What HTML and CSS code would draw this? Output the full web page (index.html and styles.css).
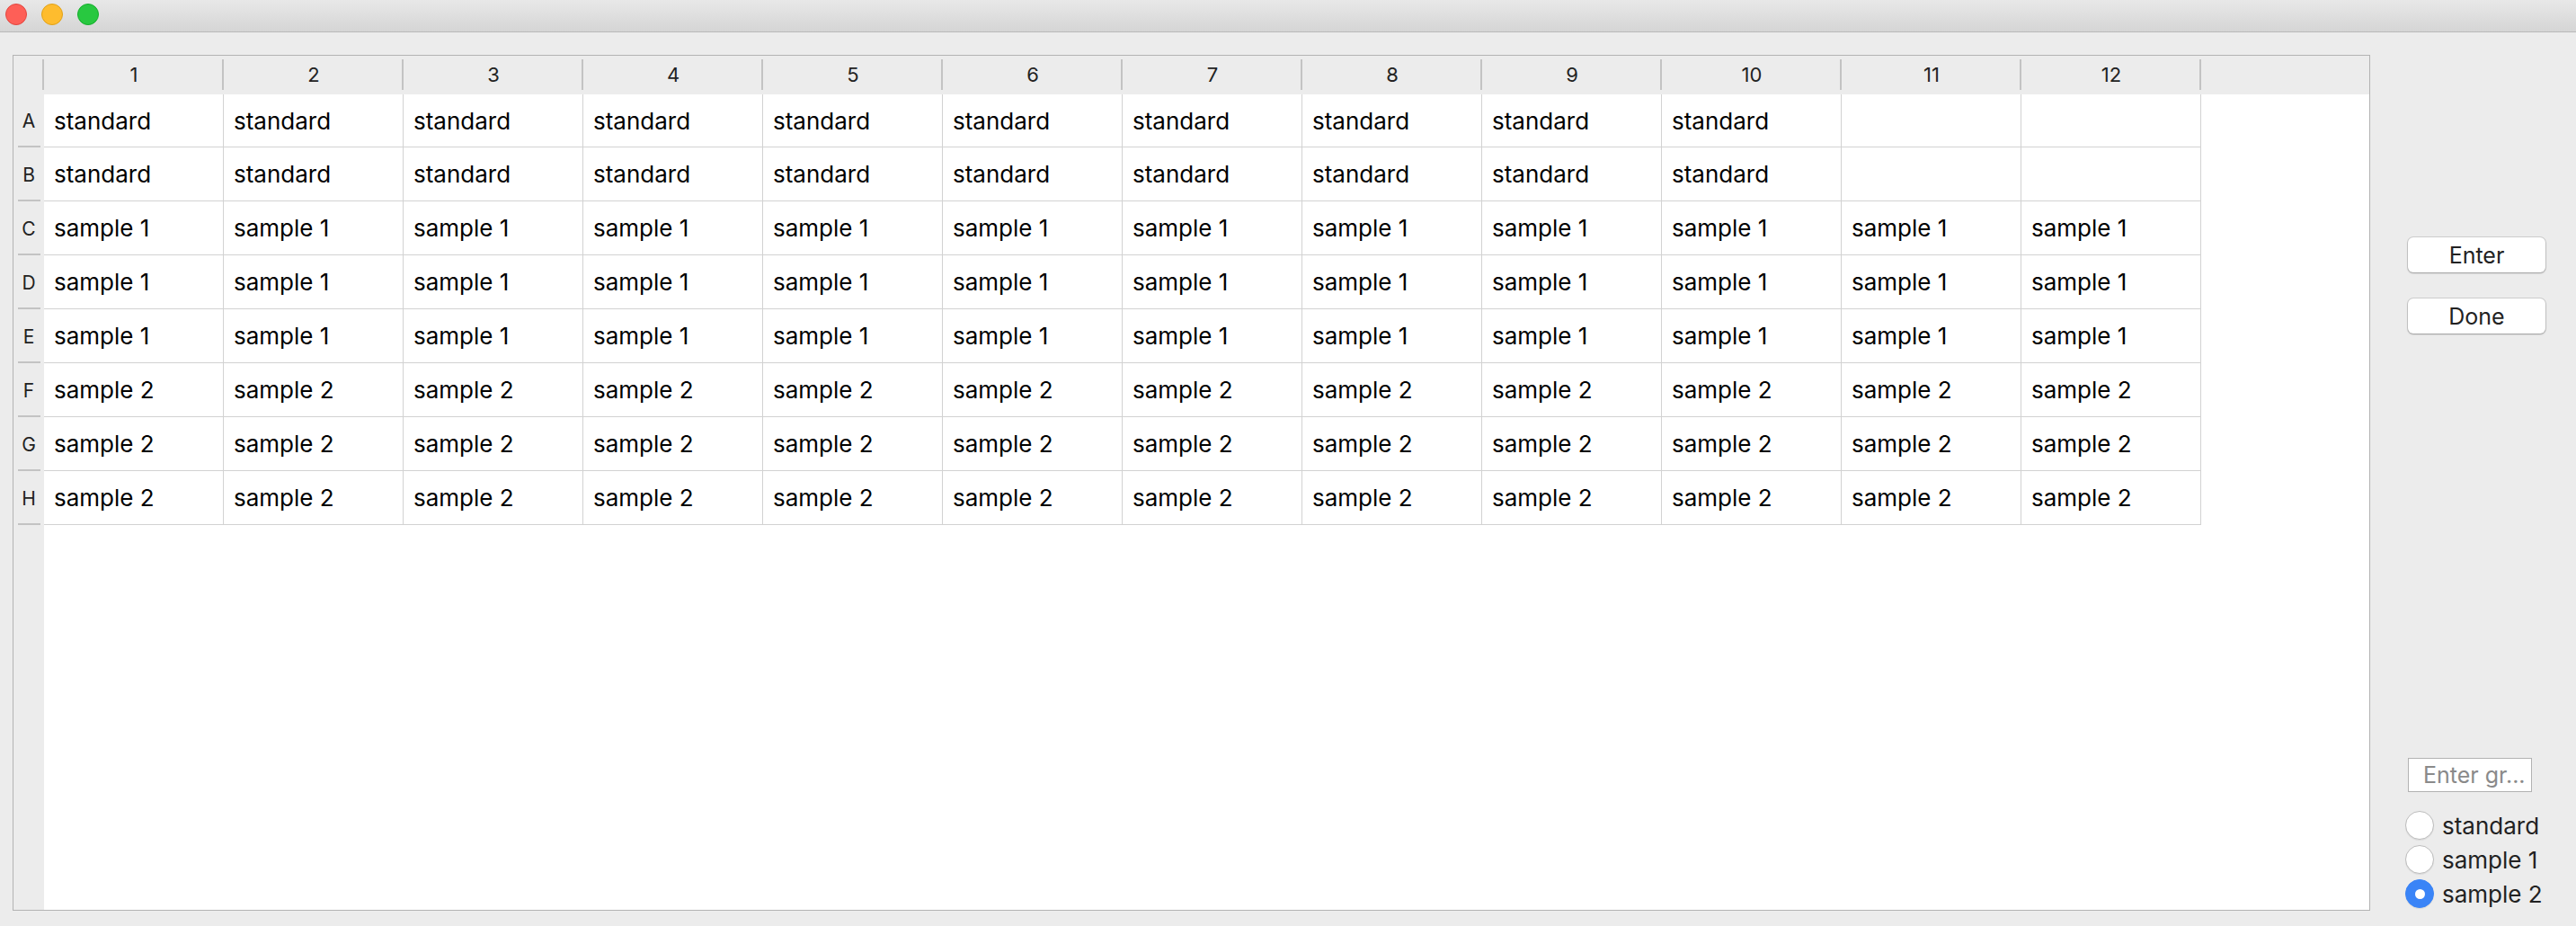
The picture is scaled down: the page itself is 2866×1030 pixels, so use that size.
FILE: index.html
```html
<!DOCTYPE html>
<html lang="en">
<head>
    <meta charset="UTF-8">
    <title>Plate</title>
    <link rel="stylesheet" href="styles.css">
</head>
<body>
    <div class="window">
        <div class="titlebar">
            <span class="light light-red"></span>
            <span class="light light-yellow"></span>
            <span class="light light-green"></span>
        </div>

        <div class="content">
            <div class="sheet">
                <div class="corner"></div>
                <div class="col-head">1</div>
                <div class="col-head">2</div>
                <div class="col-head">3</div>
                <div class="col-head">4</div>
                <div class="col-head">5</div>
                <div class="col-head">6</div>
                <div class="col-head">7</div>
                <div class="col-head">8</div>
                <div class="col-head">9</div>
                <div class="col-head">10</div>
                <div class="col-head">11</div>
                <div class="col-head">12</div>
                <div class="head-fill"></div>
                <div class="side-fill"></div>

                <div class="row-head">A</div>
                <div class="cell">standard</div><div class="cell">standard</div><div class="cell">standard</div><div class="cell">standard</div><div class="cell">standard</div><div class="cell">standard</div><div class="cell">standard</div><div class="cell">standard</div><div class="cell">standard</div><div class="cell">standard</div><div class="cell"></div><div class="cell"></div>

                <div class="row-head">B</div>
                <div class="cell">standard</div><div class="cell">standard</div><div class="cell">standard</div><div class="cell">standard</div><div class="cell">standard</div><div class="cell">standard</div><div class="cell">standard</div><div class="cell">standard</div><div class="cell">standard</div><div class="cell">standard</div><div class="cell"></div><div class="cell"></div>

                <div class="row-head">C</div>
                <div class="cell">sample 1</div><div class="cell">sample 1</div><div class="cell">sample 1</div><div class="cell">sample 1</div><div class="cell">sample 1</div><div class="cell">sample 1</div><div class="cell">sample 1</div><div class="cell">sample 1</div><div class="cell">sample 1</div><div class="cell">sample 1</div><div class="cell">sample 1</div><div class="cell">sample 1</div>

                <div class="row-head">D</div>
                <div class="cell">sample 1</div><div class="cell">sample 1</div><div class="cell">sample 1</div><div class="cell">sample 1</div><div class="cell">sample 1</div><div class="cell">sample 1</div><div class="cell">sample 1</div><div class="cell">sample 1</div><div class="cell">sample 1</div><div class="cell">sample 1</div><div class="cell">sample 1</div><div class="cell">sample 1</div>

                <div class="row-head">E</div>
                <div class="cell">sample 1</div><div class="cell">sample 1</div><div class="cell">sample 1</div><div class="cell">sample 1</div><div class="cell">sample 1</div><div class="cell">sample 1</div><div class="cell">sample 1</div><div class="cell">sample 1</div><div class="cell">sample 1</div><div class="cell">sample 1</div><div class="cell">sample 1</div><div class="cell">sample 1</div>

                <div class="row-head">F</div>
                <div class="cell">sample 2</div><div class="cell">sample 2</div><div class="cell">sample 2</div><div class="cell">sample 2</div><div class="cell">sample 2</div><div class="cell">sample 2</div><div class="cell">sample 2</div><div class="cell">sample 2</div><div class="cell">sample 2</div><div class="cell">sample 2</div><div class="cell">sample 2</div><div class="cell">sample 2</div>

                <div class="row-head">G</div>
                <div class="cell">sample 2</div><div class="cell">sample 2</div><div class="cell">sample 2</div><div class="cell">sample 2</div><div class="cell">sample 2</div><div class="cell">sample 2</div><div class="cell">sample 2</div><div class="cell">sample 2</div><div class="cell">sample 2</div><div class="cell">sample 2</div><div class="cell">sample 2</div><div class="cell">sample 2</div>

                <div class="row-head">H</div>
                <div class="cell">sample 2</div><div class="cell">sample 2</div><div class="cell">sample 2</div><div class="cell">sample 2</div><div class="cell">sample 2</div><div class="cell">sample 2</div><div class="cell">sample 2</div><div class="cell">sample 2</div><div class="cell">sample 2</div><div class="cell">sample 2</div><div class="cell">sample 2</div><div class="cell">sample 2</div>

                <div class="row-head-fill"></div>
                <div class="bottom-fill"></div>
            </div>

            <div class="side">
                <button class="mac-button first">Enter</button>
                <button class="mac-button">Done</button>

                <div class="side-bottom">
                    <input class="group-input" type="text" placeholder="Enter gr...">
                    <label class="radio"><span class="radio-dot"></span>standard</label>
                    <label class="radio"><span class="radio-dot"></span>sample 1</label>
                    <label class="radio"><span class="radio-dot checked"></span>sample 2</label>
                </div>
            </div>
        </div>
    </div>
</body>
</html>
```

FILE: styles.css
```css
body {
    margin: 0;
    background-color: #ececec;
    font-family: Inter, "Liberation Sans", sans-serif;
    overflow: hidden;
}

.window {
    width: 2866px;
    height: 1030px;
    display: flex;
    flex-direction: column;
}

.titlebar {
    height: 36px;
    flex: 0 0 36px;
    background: linear-gradient(#e8e8e8, #d5d5d5);
    border-bottom: 1px solid #b9b9b9;
    display: flex;
    align-items: center;
    gap: 16px;
    padding-left: 6px;
    padding-bottom: 4px;
    box-sizing: border-box;
}

.light {
    width: 24px;
    height: 24px;
    border-radius: 50%;
    box-sizing: border-box;
}

.light-red {
    background-color: #fe5f57;
    border: 1px solid #e2463f;
}

.light-yellow {
    background-color: #febc2e;
    border: 1px solid #e1a116;
}

.light-green {
    background-color: #28c840;
    border: 1px solid #14ae2b;
}

.content {
    flex: 1;
    display: flex;
    padding: 25px 0 17px 14px;
    min-height: 0;
}

.sheet {
    flex: 0 0 2623px;
    box-sizing: border-box;
    border: 1px solid #b3b3b3;
    background-color: #fff;
    display: grid;
    grid-template-columns: 34px repeat(12, 200px) 1fr;
    grid-template-rows: 43px 59px repeat(7, 60px) 1fr;
}

.corner,
.col-head,
.head-fill {
    background-color: #ececec;
    position: relative;
}

.col-head {
    display: flex;
    align-items: center;
    justify-content: center;
    font-size: 22px;
    color: #222;
    padding-bottom: 2px;
}

.corner::after,
.col-head::after {
    content: "";
    position: absolute;
    right: 0;
    top: 4px;
    bottom: 5px;
    width: 2px;
    background-color: #c3c3c3;
}

.side-fill {
    grid-column: 14;
    grid-row: 2 / 10;
}

.row-head {
    background-color: #ececec;
    display: flex;
    align-items: center;
    justify-content: center;
    font-size: 21px;
    color: #222;
    position: relative;
}

.row-head::after {
    content: "";
    position: absolute;
    left: 5px;
    right: 4px;
    bottom: 0;
    height: 2px;
    background-color: #c3c3c3;
}

.cell {
    border-right: 1px solid #d2d2d2;
    border-bottom: 1px solid #d2d2d2;
    display: flex;
    align-items: center;
    padding-left: 11px;
    font-size: 26px;
    color: #000;
    white-space: nowrap;
}

.row-head-fill {
    background-color: #ececec;
}

.bottom-fill {
    grid-column: 2 / 15;
}

.side {
    flex: 1;
    display: flex;
    flex-direction: column;
    padding-left: 42px;
}

.mac-button {
    width: 153px;
    height: 39px;
    margin-top: 29px;
    background-color: #fff;
    border: none;
    border-radius: 6px;
    box-shadow: 0 0 0 1px rgba(0, 0, 0, 0.12), 0 1px 2px rgba(0, 0, 0, 0.25);
    font-family: Inter, "Liberation Sans", sans-serif;
    font-size: 25px;
    color: #222;
    padding: 0;
}

.mac-button.first {
    margin-top: 203px;
}

.side-bottom {
    margin-top: auto;
    margin-left: -3px;
    display: flex;
    flex-direction: column;
}

.group-input {
    width: 138px;
    height: 38px;
    box-sizing: border-box;
    margin-left: 3px;
    margin-bottom: 18px;
    border: 1px solid #b2b2b2;
    background-color: #fff;
    font-family: Inter, "Liberation Sans", sans-serif;
    font-size: 25px;
    padding: 0 0 0 16px;
    outline: none;
}

.group-input::placeholder {
    color: #8a8a8a;
}

.radio {
    display: flex;
    align-items: center;
    gap: 9px;
    height: 38px;
    font-size: 26px;
    color: #222;
}

.radio-dot {
    width: 32px;
    height: 32px;
    box-sizing: border-box;
    border-radius: 50%;
    background-color: #fff;
    border: 1px solid #bdbdbd;
    box-shadow: 0 1px 1px rgba(0, 0, 0, 0.08);
    display: flex;
    align-items: center;
    justify-content: center;
}

.radio-dot.checked {
    background-color: #3a84f7;
    border-color: #3a84f7;
}

.radio-dot.checked::after {
    content: "";
    width: 11px;
    height: 11px;
    border-radius: 50%;
    background-color: #fff;
}
```
